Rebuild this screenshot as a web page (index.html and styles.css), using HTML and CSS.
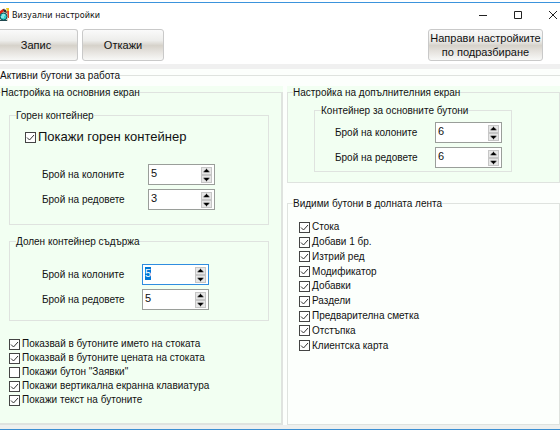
FILE: index.html
```html
<!DOCTYPE html>
<html lang="bg">
<head>
<meta charset="utf-8">
<title>Визуални настройки</title>
<link rel="stylesheet" href="styles.css">
</head>
<body>
<svg class="defs" aria-hidden="true">
  <symbol id="up" viewBox="0 0 9 7"><path d="M4 1h1v1h1v1h1v1h1v1H1V4h1V3h1V2h1z"/></symbol>
  <symbol id="down" viewBox="0 0 9 7"><path d="M1 2h7v1H7v1H6v1H5v1H4V5H3V4H2V3H1z"/></symbol>
</svg>
<div class="window">
  <header class="titlebar">
    <svg class="logo" viewBox="0 0 10 14" aria-hidden="true">
      <path d="M0 4L4 0l4 4v9H0z" fill="#d8d0c0"/>
      <path d="M0 3l3-2 2 1-4 4H0z" fill="#e02818"/>
      <path d="M3 1l3 1 1 3-3-1z" fill="#303030"/>
      <path d="M6 0h3v3H7z" fill="#f0c818"/>
      <path d="M7 3h2v7H8z" fill="#e84020"/>
      <circle cx="3.500" cy="8.500" r="3.500" fill="#38d0d0" stroke="#105058"/>
      <path d="M2 7h3M1 9h3" stroke="#d8ffff" fill="none"/>
      <path d="M0 12h7v1H0z" fill="#204850"/>
    </svg>
    <h1>Визуални настройки</h1>
    <div class="controls">
      <button type="button" aria-label="Минимизиране"><svg viewBox="0 0 10 10"><path d="M1 5.500h8"/></svg></button>
      <button type="button" aria-label="Максимизиране"><svg viewBox="0 0 10 10"><path d="M1.500 1.500h7v7h-7z"/></svg></button>
      <button type="button" aria-label="Затваряне"><svg viewBox="0 0 10 10"><path d="M1 1l8 8M9 1l-8 8"/></svg></button>
    </div>
  </header>
  <div class="toolbar">
    <button type="button" class="btn save">Запис</button>
    <button type="button" class="btn">Откажи</button>
    <button type="button" class="btn defaults">Направи настройките<br>по подразбиране</button>
  </div>
  <main>
    <fieldset class="root">
      <legend>Активни бутони за работа</legend>
      <div class="columns">
        <div class="panel tinted main-screen">
          <fieldset class="group">
            <legend>Настройка на основния екран</legend>
            <fieldset class="inner top">
              <legend>Горен контейнер</legend>
              <label class="check large"><input type="checkbox" checked>Покажи горен контейнер</label>
              <div class="fields">
                <label for="top-cols">Брой на колоните</label>
                <div class="spin"><input id="top-cols" type="number" value="5"><div><button type="button" aria-label="Увеличи"><svg><use href="#up"/></svg></button><button type="button" aria-label="Намали"><svg><use href="#down"/></svg></button></div></div>
                <label for="top-rows">Брой на редовете</label>
                <div class="spin"><input id="top-rows" type="number" value="3"><div><button type="button" aria-label="Увеличи"><svg><use href="#up"/></svg></button><button type="button" aria-label="Намали"><svg><use href="#down"/></svg></button></div></div>
              </div>
            </fieldset>
            <fieldset class="inner bottom">
              <legend>Долен контейнер съдържа</legend>
              <div class="fields">
                <label for="bottom-cols">Брой на колоните</label>
                <div class="spin"><input id="bottom-cols" type="number" value="5" autofocus><div><button type="button" aria-label="Увеличи"><svg><use href="#up"/></svg></button><button type="button" aria-label="Намали"><svg><use href="#down"/></svg></button></div></div>
                <label for="bottom-rows">Брой на редовете</label>
                <div class="spin"><input id="bottom-rows" type="number" value="5"><div><button type="button" aria-label="Увеличи"><svg><use href="#up"/></svg></button><button type="button" aria-label="Намали"><svg><use href="#down"/></svg></button></div></div>
              </div>
            </fieldset>
            <div class="options">
              <label class="check"><input type="checkbox" checked>Показвай в бутоните името на стоката</label>
              <label class="check"><input type="checkbox" checked>Показвай в бутоните цената на стоката</label>
              <label class="check"><input type="checkbox">Покажи бутон "Заявки"</label>
              <label class="check"><input type="checkbox" checked>Покажи вертикална екранна клавиатура</label>
              <label class="check"><input type="checkbox" checked>Покажи текст на бутоните</label>
            </div>
          </fieldset>
        </div>
        <div class="side">
          <div class="panel tinted">
            <fieldset class="group extra">
              <legend>Настройка на допълнителния екран</legend>
              <fieldset class="inner">
                <legend>Контейнер за основните бутони</legend>
                <div class="fields">
                  <label for="extra-cols">Брой на колоните</label>
                  <div class="spin"><input id="extra-cols" type="number" value="6"><div><button type="button" aria-label="Увеличи"><svg><use href="#up"/></svg></button><button type="button" aria-label="Намали"><svg><use href="#down"/></svg></button></div></div>
                  <label for="extra-rows">Брой на редовете</label>
                  <div class="spin"><input id="extra-rows" type="number" value="6"><div><button type="button" aria-label="Увеличи"><svg><use href="#up"/></svg></button><button type="button" aria-label="Намали"><svg><use href="#down"/></svg></button></div></div>
                </div>
              </fieldset>
            </fieldset>
          </div>
          <div class="panel ribbon">
            <fieldset class="group">
              <legend>Видими бутони в долната лента</legend>
              <div class="visible">
                <label class="check"><input type="checkbox" checked>Стока</label>
                <label class="check"><input type="checkbox" checked>Добави 1 бр.</label>
                <label class="check"><input type="checkbox" checked>Изтрий ред</label>
                <label class="check"><input type="checkbox" checked>Модификатор</label>
                <label class="check"><input type="checkbox" checked>Добавки</label>
                <label class="check"><input type="checkbox" checked>Раздели</label>
                <label class="check"><input type="checkbox" checked>Предварителна сметка</label>
                <label class="check"><input type="checkbox" checked>Отстъпка</label>
                <label class="check"><input type="checkbox" checked>Клиентска карта</label>
              </div>
            </fieldset>
          </div>
        </div>
      </div>
    </fieldset>
  </main>
</div>
<script src="script.js"></script>
</body>
</html>
```
FILE: styles.css
```css
* { box-sizing: border-box; }

body {
  margin: 0;
  padding: 2px 0;
  background: #fff;
  color: #111;
  font: 10px/14px "Liberation Sans", sans-serif;
}

button, input { font: inherit; color: inherit; }

.defs { display: none; }

.window {
  overflow: hidden;
  border-top: 1px solid #3b93dc;
  border-bottom: 1px solid #3b8fd2;
}

.titlebar {
  display: flex;
  align-items: center;
  height: 23px;
}

.logo { width: 10px; height: 14px; }

h1 {
  flex: 1;
  margin: 0 0 0 2px;
  font: 9px/12px "DejaVu Sans Condensed", sans-serif;
}

.controls { display: flex; }

.controls button {
  display: flex;
  align-items: center;
  justify-content: center;
  width: 35px;
  height: 22px;
  padding: 0;
  border: 0;
  background: none;
}

.controls button:last-child { margin-right: -10px; }
.controls svg { width: 10px; height: 10px; fill: none; stroke: #222; }

.toolbar {
  display: flex;
  gap: 4px;
  padding: 3px 17px 3px 0;
  border-bottom: 5px solid #f0f0f0;
}

.btn {
  width: 82px;
  height: 32px;
  padding: 0;
  border: 1px solid #c9c9c9;
  border-radius: 3px;
  background: linear-gradient(#fafafa, #ededeb 35%, #d6d2ca 52%, #e4e1dc 70%, #f8f8f7);
  font-size: 11px;
  line-height: 14px;
  white-space: nowrap;
}

.save {
  width: 78px;
  padding-right: 5px;
  border-left: 0;
  border-radius: 0 3px 3px 0;
}

.defaults { width: 115px; margin-left: auto; }

main { background: #fcfffc; border-bottom: 4px solid #eef0ee; }

fieldset {
  min-width: 0;
  margin: 0;
  padding: 0;
  border: 1px solid #dfe3df;
}

legend { padding: 0; height: 12px; white-space: nowrap; }

.root { padding-top: 5px; border-width: 1px 0 0; }

.columns {
  display: grid;
  grid-template-columns: 283fr 273fr;
  gap: 4px;
}

.tinted { background: #f2fff2; }

.main-screen > .group {
  height: 100%;
  padding-right: 12px;
  padding-left: 9px;
  border-left: 0;
  border-right-width: 2px;
  border-bottom-width: 2px;
}

.main-screen > .group > legend { margin-left: -8px; }

.inner { padding: 0 0 0 32px; }
.inner > legend { margin-left: -26px; }

.top { margin-top: 11px; padding-bottom: 14px; }
.top .check { margin: 8px 0 19px -17px; }
.bottom { margin-top: 10px; padding-bottom: 10px; }

.fields {
  display: grid;
  grid-template-columns: 106px 67px;
  row-gap: 4px;
  align-items: center;
}

.bottom .fields { grid-template-columns: 100px 67px; margin-top: 17px; }

.spin {
  display: flex;
  height: 21px;
  padding: 2px;
  border: 1px solid #9a9e9a;
  background: #fff;
}

.spin:focus-within { border-color: #2f8de0; }

.spin input {
  flex: 1;
  min-width: 0;
  height: 13px;
  padding: 0;
  border: 0;
  outline: 0;
  background: none;
  font-size: 11px;
  line-height: 13px;
  appearance: textfield;
}

.spin input::-webkit-inner-spin-button { display: none; }
.spin input::selection { background: #0078d7; color: #fff; }

.spin button {
  display: flex;
  width: 11px;
  height: 8px;
  padding: 0;
  border: 1px solid #c6c6c6;
  background: #e6e6e6;
}

.spin svg { width: 9px; height: 6px; }

.check {
  display: flex;
  align-items: center;
  gap: 2px;
}

.check input {
  flex: none;
  width: 11px;
  height: 11px;
  margin: 0;
  border: 1px solid #444;
  background: #fff;
  appearance: none;
}

.check input:checked {
  background: #fff url("data:image/svg+xml,%3Csvg xmlns='http://www.w3.org/2000/svg' viewBox='0 0 9 9'%3E%3Cpath d='M1 4.500l2.500 2.500L8 2' fill='none' stroke='%23333'/%3E%3C/svg%3E");
}

.large { font-size: 13px; line-height: 16px; }

.options {
  display: grid;
  grid-auto-rows: 14px;
  margin: 16px 0 16px;
}

.side { display: flex; flex-direction: column; gap: 14px; }

.extra { padding: 6px 47px 10px 26px; }
.extra > legend { margin-left: -21px; }
.extra .inner { padding: 6px 0 3px 20px; }
.extra .inner > legend { margin-left: -14px; }
.extra .fields { grid-template-columns: 100px 67px; }

.ribbon { flex: 1; }
.ribbon .group { height: 100%; padding-left: 11px; }
.ribbon legend { margin-left: -6px; }

.visible {
  display: grid;
  grid-auto-rows: 1fr;
  height: 133px;
  margin-top: 11px;
}
```
FILE: script.js
```js
const field = document.getElementById("bottom-cols");
field.focus();
field.select();
```
